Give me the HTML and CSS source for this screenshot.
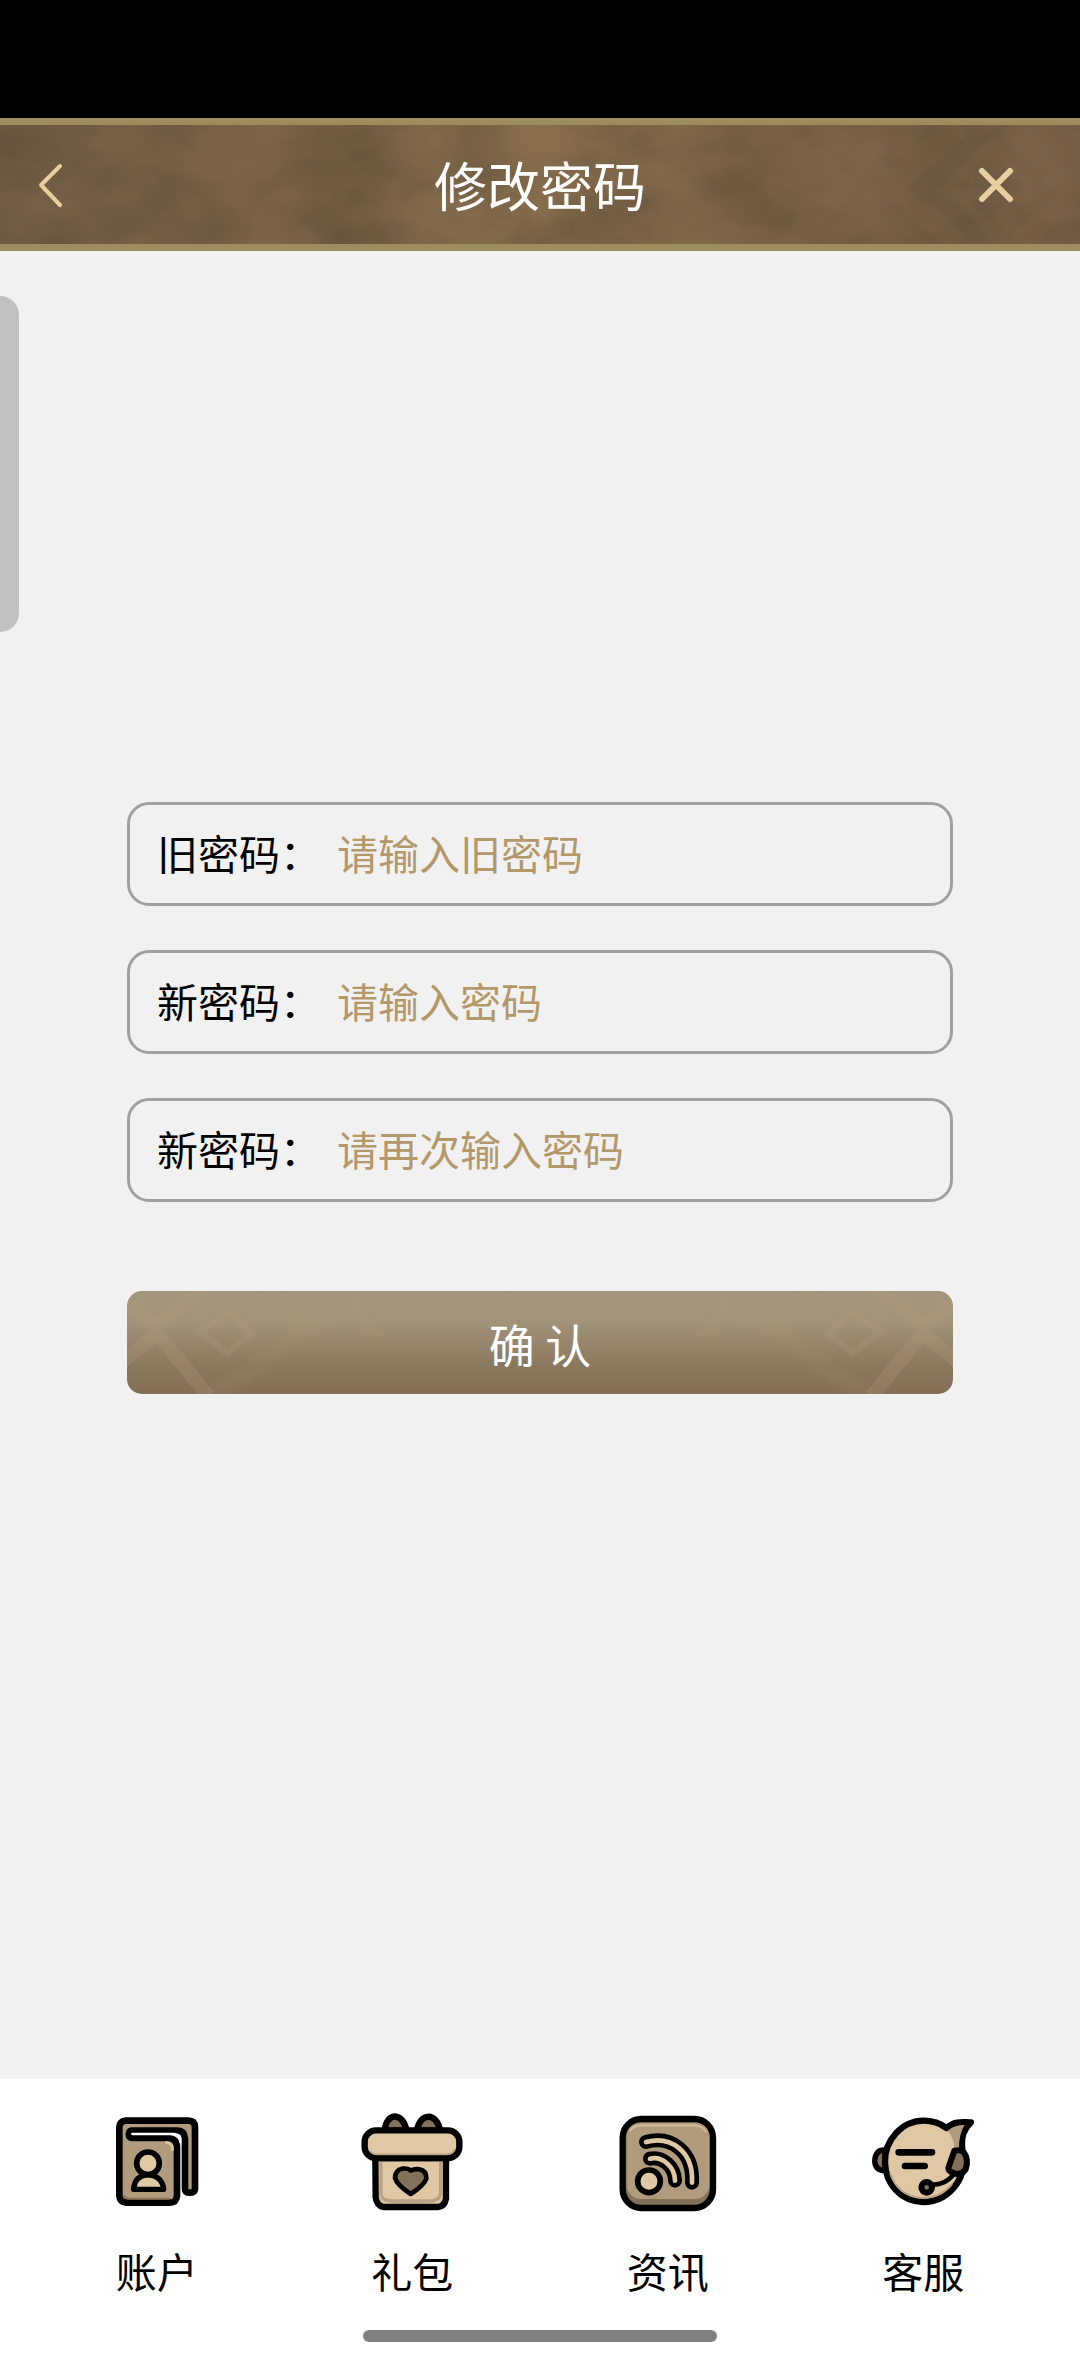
FILE: index.html
```html
<!DOCTYPE html>
<html lang="zh-CN">
<head>
    <meta charset="UTF-8">
    <meta name="viewport" content="width=device-width, initial-scale=1.0">
    <title>修改密码</title>
    <link rel="stylesheet" href="styles.css">
</head>
<body>
    <div class="status-bar"></div>
    <header class="header">
        <svg class="texture" viewBox="0 0 1080 120" preserveAspectRatio="none" aria-hidden="true">
            <filter id="grain" x="0" y="0" width="100%" height="100%" color-interpolation-filters="sRGB">
                <feTurbulence type="fractalNoise" baseFrequency="0.01 0.015" numOctaves="6" seed="4"/>
                <feColorMatrix values="0 0 0 0 0.32  0 0 0 0 0.28  0 0 0 0 0.2  1 0 0 0 -0.3"/>
            </filter>
            <rect width="1080" height="120" filter="url(#grain)"/>
            <g fill="none" stroke="#86694a" stroke-width="22" opacity=".2">
                <path d="M820 0 L960 120 M960 0 L830 120 M1010 0 L1070 70 L1020 120"/>
                <path d="M990 20 L1030 62 L990 104 L950 62 Z" stroke-width="10"/>
            </g>
        </svg>
        <button class="icon-btn back" type="button" aria-label="返回">
            <svg width="60" height="60" viewBox="0 0 60 60" fill="none" stroke="#e8cf9f" stroke-width="4" stroke-linecap="round" stroke-linejoin="round">
                <path d="M40 11 L21 30 L40 50"/>
            </svg>
        </button>
        <h1>修改密码</h1>
        <button class="icon-btn close" type="button" aria-label="关闭">
            <svg width="60" height="60" viewBox="0 0 60 60" fill="none" stroke="#e8cf9f" stroke-width="6" stroke-linecap="round">
                <path d="M16 16 L44 44 M44 16 L16 44"/>
            </svg>
        </button>
    </header>

    <main>
        <form class="form">
            <div class="field">
                <label for="oldPassword">旧密码：</label>
                <input type="password" id="oldPassword" placeholder="请输入旧密码">
            </div>
            <div class="field">
                <label for="newPassword">新密码：</label>
                <input type="password" id="newPassword" placeholder="请输入密码">
            </div>
            <div class="field">
                <label for="repeatPassword">新密码：</label>
                <input type="password" id="repeatPassword" placeholder="请再次输入密码">
            </div>
            <button class="submit" type="button">
                <svg class="texture" viewBox="0 0 826 103" preserveAspectRatio="xMidYMid slice" aria-hidden="true">
                    <defs>
                        <g id="lattice" fill="none" stroke="#b59a78">
                            <path d="M-6 8 L30 34 L82 -6 M-6 72 L30 42 L82 106" stroke-width="14" opacity=".28"/>
                            <path d="M102 20 L125 43 L100 62 L74 41 Z" stroke-width="7" opacity=".25"/>
                            <path d="M82 106 L118 84 L180 38 L140 -6" stroke-width="18" opacity=".1"/>
                            <path d="M180 38 L230 18 L252 48" stroke-width="14" opacity=".12"/>
                        </g>
                    </defs>
                    <use href="#lattice"/>
                    <use href="#lattice" transform="translate(826 0) scale(-1 1)"/>
                </svg>
                <span>确 认</span>
            </button>
        </form>
    </main>

    <nav class="tabs">
        <a href="#account">
            <svg width="120" height="120" viewBox="-10 30 360 360" stroke="#000" stroke-linejoin="round" stroke-linecap="round">
                <path d="M76 92 H264 Q284 92 284 112 V298 Q282 308 268 308 Q254 308 254 296 V146 Q252 122 232 122 H92 Q84 124 86 138 Q88 144 98 144 H204 Q230 146 230 172 V318 Q228 338 208 338 H78 Q58 336 57 316 V112 Q58 94 76 92 Z" fill="#b09c7c" stroke-width="20"/>
                <path d="M96 132 H222 Q240 134 240 156" fill="none" stroke="#fff" stroke-width="7"/>
                <path d="M198 157 Q216 160 217 178" fill="none" stroke="#dbc4a1" stroke-width="8"/>
                <path d="M72 318 Q74 326 86 326 H206" fill="none" stroke="#87745a" stroke-width="6"/>
                <path d="M100 298 Q102 258 142 254 Q186 258 190 298 Z" fill="#dfc8a3" stroke-width="16"/>
                <circle cx="143" cy="220" r="34" fill="#dfc8a3" stroke-width="17"/>
            </svg>
            <span>账户</span>
        </a>
        <a href="#gift">
            <svg width="120" height="120" viewBox="4 0 360 360" stroke="#000" stroke-width="19" stroke-linejoin="round">
                <path d="M101 92 Q108 50 134 49 Q160 54 168 92 Z M198 92 Q208 50 236 50 Q262 56 268 92 Z" fill="#83715a"/>
                <path d="M74 174 H286 V296 Q282 319 262 321 H98 Q78 316 75 292 Z" fill="#dfc8a3"/>
                <path d="M91 186 V286 Q96 302 120 303 H240 Q266 302 270 280 V186" fill="none" stroke="#b8a282" stroke-width="10"/>
                <rect x="42" y="91" width="284" height="83" rx="34" fill="#dfc8a3"/>
                <path d="M58 154 Q66 164 82 163 H288 Q306 162 312 148" fill="none" stroke="#b8a282" stroke-width="5"/>
                <path d="M181 212 Q190 206 206 208 Q228 212 227 236 Q220 256 180 282 Q140 256 133 234 Q134 210 154 206 Q174 204 181 212 Z" fill="#83715a" stroke-width="14"/>
            </svg>
            <span>礼包</span>
        </a>
        <a href="#news">
            <svg width="120" height="120" viewBox="-7 0 360 360" stroke="#000" stroke-linejoin="round" stroke-linecap="round">
                <rect x="37" y="57" width="271" height="267" rx="56" fill="#83715a" stroke-width="19"/>
                <rect x="49" y="68" width="248" height="229" rx="42" fill="#b09c7c" stroke="none"/>
                <path d="M60 92 Q70 76 94 76 H250 Q276 76 286 94" fill="none" stroke="#cfb995" stroke-width="7"/>
                <g fill="none" stroke-width="42">
                    <path d="M107 126 C180 106 250 152 245 248"/>
                    <path d="M119 176 C156 168 194 200 194 242"/>
                    <g stroke="#dfc8a3" stroke-width="14">
                        <path d="M107 126 C180 106 250 152 245 248"/>
                        <path d="M119 176 C156 168 194 200 194 242"/>
                    </g>
                </g>
                <circle cx="116" cy="244" r="34" fill="#dfc8a3" stroke-width="17"/>
            </svg>
            <span>资讯</span>
        </a>
        <a href="#service">
            <svg width="120" height="120" viewBox="10 0 360 360" stroke="#000" stroke-linejoin="round" stroke-linecap="round">
                <path d="M76 150 Q48 148 45 182 Q46 212 76 212 Z" fill="#83715a" stroke-width="16"/>
                <path d="M192 62 Q232 62 260 84 C288 60 316 68 334 67 C312 88 304 108 308 150 Q320 210 292 250 Q254 306 190 306 C126 304 78 256 76 188 C74 120 128 62 192 62 Z" fill="#dfc8a3" stroke-width="19"/>
                <path d="M264 92 Q286 76 314 76 Q298 104 298 142 L284 146 Q284 116 264 92 Z" fill="#b09c7c" stroke="none"/>
                <path d="M92 222 Q116 288 184 294 Q244 294 276 254" fill="none" stroke="#b8a282" stroke-width="6"/>
                <path d="M284 152 Q300 148 312 156 Q328 178 318 208 Q304 228 284 220 Q266 214 266 204 Z" fill="#83715a" stroke-width="18"/>
                <path d="M280 226 Q254 256 218 254" fill="none" stroke-width="14"/>
                <circle cx="201" cy="262" r="16" fill="#83715a" stroke-width="18"/>
                <path d="M117 157 H217 M136 198 H195" stroke-width="20"/>
            </svg>
            <span>客服</span>
        </a>
    </nav>

    <div class="side-handle"></div>
    <div class="home-bar"></div>
</body>
</html>
```

FILE: styles.css
```css
* {
    box-sizing: border-box;
}
body {
    margin: 0;
    min-height: 100vh;
    display: flex;
    flex-direction: column;
    background-color: #f1f1f1;
    color: #000;
    font-family: "Noto Sans CJK SC", sans-serif;
    font-size: 41px;
}
button, input {
    font-family: inherit;
    font-size: inherit;
}
button {
    border: none;
    cursor: pointer;
}
.status-bar {
    height: 118px;
    background-color: #000;
}
.header {
    position: relative;
    display: flex;
    align-items: center;
    justify-content: space-between;
    height: 133px;
    padding: 0 54px 0 20px;
    border-top: 7px solid #9d8d5e;
    border-bottom: 7px solid #9d8d5e;
    background: linear-gradient(90deg, #745f48, #7c644a 25%, #886e4d 50%, #7f654a 75%, #765f48);
}
.texture {
    position: absolute;
    top: 0;
    left: 0;
    width: 100%;
    height: 100%;
}
.header h1 {
    flex: 1;
    position: relative;
    margin: 0 0 2px;
    padding-left: 34px;
    color: #fff;
    font-size: 53px;
    font-weight: 400;
    line-height: 80px;
    text-align: center;
}
.icon-btn {
    position: relative;
    padding: 0;
    background: none;
}
.icon-btn svg {
    display: block;
}
main {
    flex: 1;
    display: flex;
    flex-direction: column;
    justify-content: center;
    padding: 0 127px 134px;
}
.form {
    display: flex;
    flex-direction: column;
    gap: 44px;
}
.field {
    display: flex;
    align-items: center;
    height: 104px;
    padding: 0 27px 4px;
    border: 3px solid #a0a0a0;
    border-radius: 22px;
}
.field label {
    width: 180px;
}
.field input {
    flex: 1;
    min-width: 0;
    padding: 0;
    border: none;
    outline: none;
    background: none;
}
.field input::placeholder {
    color: #b3986a;
    opacity: 1;
}
.submit {
    position: relative;
    overflow: hidden;
    height: 103px;
    margin-top: 45px;
    border-radius: 15px;
    background: linear-gradient(#a3967e, #a0937a 30%, #8b795f 72%, #816e55);
    color: #fff;
    font-size: 46px;
}
.submit span {
    position: relative;
}
.tabs {
    display: flex;
    height: 284px;
    padding: 21px 29px 0;
    background-color: #fff;
}
.tabs a {
    flex: 1;
    display: flex;
    flex-direction: column;
    align-items: center;
    gap: 20px;
    color: #000;
    line-height: 60px;
    text-decoration: none;
}
.side-handle {
    position: absolute;
    top: 296px;
    left: 0;
    width: 19px;
    height: 336px;
    border-radius: 0 20px 20px 0;
    background-color: #c1c1c1;
}
.home-bar {
    position: fixed;
    bottom: 21px;
    left: 50%;
    width: 354px;
    height: 12px;
    margin-left: -177px;
    border-radius: 6px;
    background-color: #808080;
}
```
